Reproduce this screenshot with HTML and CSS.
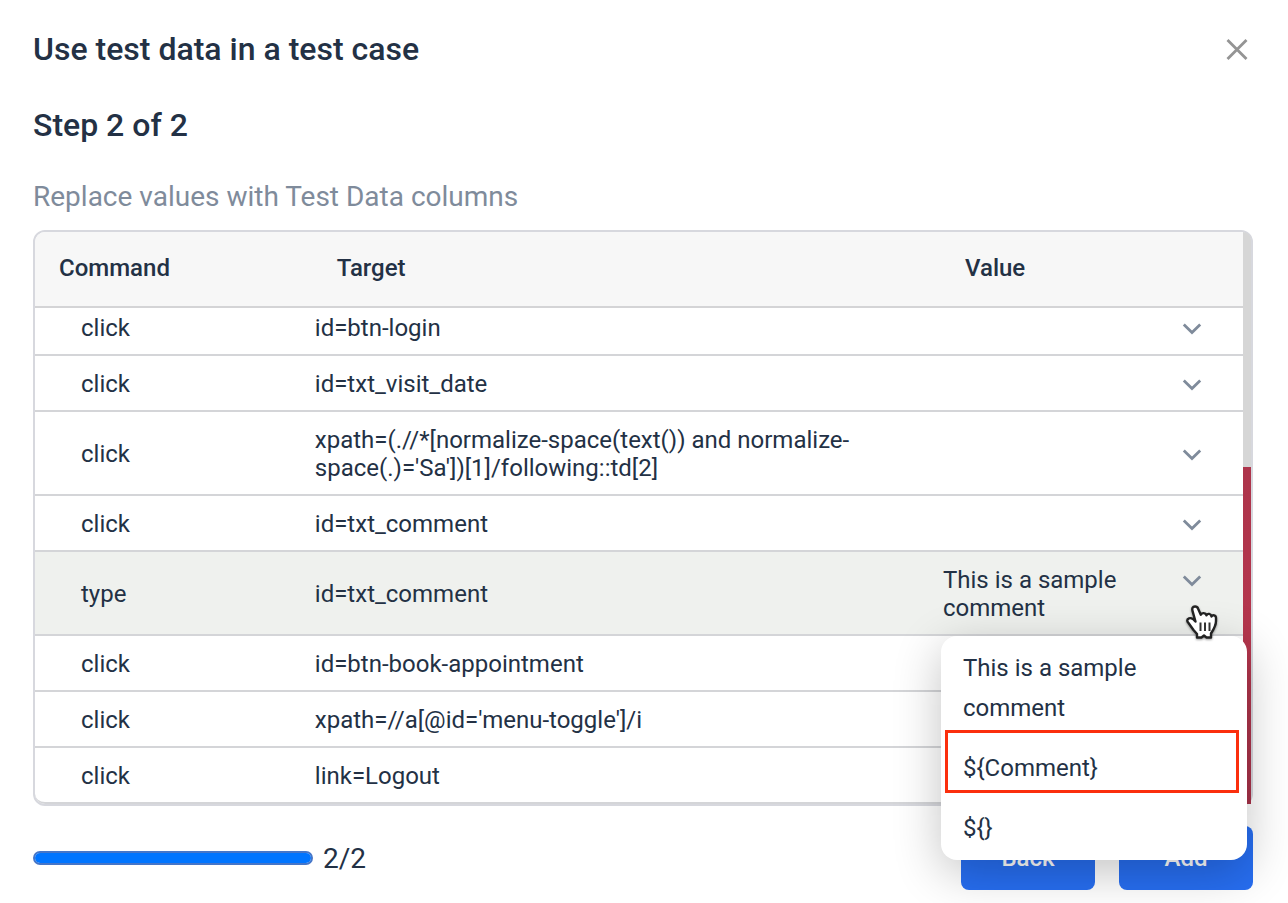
FILE: index.html
```html
<!DOCTYPE html>
<html lang="en">
<head>
<meta charset="utf-8">
<title>Use test data in a test case</title>
<link rel="stylesheet" href="styles.css">
</head>
<body>
<svg class="symbols" aria-hidden="true">
  <symbol id="chevron" viewBox="0 0 20 12"><path d="M1.800 1.500l8.200 8 8.200-8" fill="none" stroke="currentColor" stroke-width="2.800"/></symbol>
</svg>
<main class="dialog">
  <header class="dialog-header">
    <h1 class="title">Use test data in a test case</h1>
    <button class="close" type="button" aria-label="Close">
      <svg width="22" height="22" viewBox="0 0 22 22"><path d="M1.500 2l19 19M20.500 2l-19 19" fill="none" stroke="currentColor" stroke-width="2.800"/></svg>
    </button>
  </header>
  <h2 class="step">Step 2 of 2</h2>
  <p class="hint">Replace values with Test Data columns</p>

  <div class="frame">
    <table class="steps">
      <colgroup><col class="col-command"><col class="col-target"><col class="col-value"></colgroup>
      <thead>
        <tr><th>Command</th><th>Target</th><th>Value</th></tr>
      </thead>
      <tbody>
        <tr class="clipped"><td>click</td><td>id=btn-login</td><td><div class="value"><span></span><button class="toggle" type="button" aria-label="Choose value"><svg><use href="#chevron"/></svg></button></div></td></tr>
        <tr><td>click</td><td>id=txt_visit_date</td><td><div class="value"><span></span><button class="toggle" type="button" aria-label="Choose value"><svg><use href="#chevron"/></svg></button></div></td></tr>
        <tr><td>click</td><td>xpath=(.//*[normalize-space(text()) and normalize-space(.)='Sa'])[1]/following::td[2]</td><td><div class="value"><span></span><button class="toggle" type="button" aria-label="Choose value"><svg><use href="#chevron"/></svg></button></div></td></tr>
        <tr><td>click</td><td>id=txt_comment</td><td><div class="value"><span></span><button class="toggle" type="button" aria-label="Choose value"><svg><use href="#chevron"/></svg></button></div></td></tr>
        <tr class="active"><td>type</td><td>id=txt_comment</td><td>
          <div class="value"><span>This is a sample comment</span><button class="toggle" type="button" aria-label="Choose value" aria-expanded="true"><svg><use href="#chevron"/></svg></button></div>
          <div class="menu" role="menu">
            <button class="option" type="button" role="menuitem">This is a sample comment</button>
            <button class="option marked" type="button" role="menuitem">${Comment}</button>
            <button class="option" type="button" role="menuitem">${}</button>
          </div>
          <svg class="cursor" width="34" height="36" viewBox="0 0 34 36" aria-hidden="true">
            <path d="M10 2.500C7.500 2.500 6.800 4.500 7.500 6.800L10.500 17.500C9 15.500 6.500 13.500 4 14.300C1.500 15.200 2 17.500 3.500 19L8.500 26L12 30V33.500H16.500L19 31.500L21.500 33.500H26V29.500C28.500 25.500 31 22 31 17V14C31 11 27.500 10.500 26.500 12.500C26 9.500 22.500 9 21.500 11.300C20.500 8.500 17 8.500 15.800 10.800L13 4.500C12.500 3 11.500 2.500 10 2.500Z" fill="#fff" stroke="#222" stroke-width="2.400" stroke-linejoin="round"/>
            <path d="M15.500 18.500v8.500M20 18.500v8.500M24.500 18.500v8.500" fill="none" stroke="#333" stroke-width="2"/>
          </svg>
        </td></tr>
        <tr><td>click</td><td>id=btn-book-appointment</td><td></td></tr>
        <tr><td>click</td><td>xpath=//a[@id='menu-toggle']/i</td><td></td></tr>
        <tr><td>click</td><td>link=Logout</td><td></td></tr>
      </tbody>
    </table>
    <div class="track"><div class="thumb"></div></div>
  </div>

  <footer class="dialog-footer">
    <progress class="progress" id="progress" value="2" max="2">2/2</progress>
    <label class="count" for="progress">2/2</label>
    <div class="actions">
      <button class="action" type="button">Back</button>
      <button class="action" type="button">Add</button>
    </div>
  </footer>
</main>
</body>
</html>
```
FILE: styles.css
```css
*, *::after { box-sizing: border-box; }

body {
  margin: 0;
  background: #fff;
  color: #233145;
  font-family: Roboto, "Liberation Sans", sans-serif;
  font-size: 24px;
  line-height: 28px;
}

button {
  margin: 0;
  padding: 0;
  border: 0;
  background: none;
  color: inherit;
  font: inherit;
  cursor: pointer;
}

.symbols { position: absolute; width: 0; height: 0; }

.dialog { padding: 29px 35px 13px 33px; }

.dialog-header {
  display: flex;
  justify-content: space-between;
  align-items: center;
}

.title, .step {
  margin: 0;
  font-size: 32px;
  font-weight: 500;
  line-height: 40px;
}

.step { margin-top: 36px; }

.close { display: flex; padding: 5px; color: #949494; }

.hint {
  margin: 36px 0 17px;
  color: #7f8b9b;
  font-size: 28px;
  line-height: 32px;
}

.frame {
  display: flex;
  border: 2px solid #d7d8de;
  border-radius: 12px;
}

.steps {
  flex: 1;
  table-layout: fixed;
  border-spacing: 0;
}

.col-command { width: 23%; }
.col-target { width: 52%; }
.col-value { width: 25%; }

th {
  padding: 22px 24px 24px;
  border-bottom: 2px solid #d4d4d6;
  background: #f7f7f7;
  font-weight: 500;
  text-align: left;
}

th:first-child { border-top-left-radius: 10px; }

td {
  padding: 14px 2px 12px;
  border-bottom: 2px solid #d4d5d8;
}

td:first-child { padding-left: 46px; }
td:nth-child(2) { padding-right: 60px; }
td:last-child { position: relative; }
tr:last-child td:first-child { border-bottom-left-radius: 10px; }

.clipped td { padding-top: 6px; }
.active td { background: #eff1ee; }

.value {
  display: flex;
  align-items: flex-start;
  justify-content: space-between;
  min-height: 28px;
}

.value span { max-width: 200px; }

.toggle {
  display: flex;
  align-items: center;
  height: 28px;
  margin-right: 39px;
  padding-top: 2px;
  color: #7f8b9b;
}

.toggle svg { width: 20px; height: 12px; }

.menu {
  position: absolute;
  z-index: 2;
  top: 100%;
  left: 0;
  right: -4px;
  margin-top: 2px;
  padding: 2px 0;
  border-radius: 16px;
  background: #fff;
  box-shadow: 0 12px 48px rgba(0, 0, 0, 0.24);
}

.option {
  display: block;
  position: relative;
  width: 100%;
  padding: 10px 64px 10px 22px;
  line-height: 40px;
  text-align: left;
}

.marked::after {
  content: "";
  position: absolute;
  top: -8px;
  left: 4px;
  right: 8px;
  height: 63px;
  border: 3px solid #fb2f0d;
}

.cursor {
  position: absolute;
  z-index: 3;
  right: 24px;
  bottom: -6px;
  filter: drop-shadow(0 1px 1px rgba(0, 0, 0, 0.4));
}

.track {
  display: flex;
  align-items: flex-end;
  width: 8px;
  background: #d6d6d6;
  border-top-right-radius: 8px;
}

.thumb {
  width: 100%;
  height: 59%;
  background: linear-gradient(#ad344b, #b5364d 50%, #a83249);
}

.dialog-footer {
  display: flex;
  align-items: center;
  margin-top: 20px;
}

.progress {
  appearance: none;
  width: 280px;
  height: 14px;
  border: 2px solid #4676c8;
  border-radius: 7px;
  background: #0075ff;
  overflow: hidden;
}

.progress::-webkit-progress-bar { background: #0075ff; }
.progress::-webkit-progress-value { background: #0075ff; }

.count { margin-left: 10px; padding-top: 2px; font-size: 28px; line-height: 32px; }

.actions { display: flex; gap: 24px; margin-left: auto; }

.action {
  width: 134px;
  height: 64px;
  border-radius: 8px;
  background: #276ef1;
  color: #fff;
  font-weight: 500;
}
```
